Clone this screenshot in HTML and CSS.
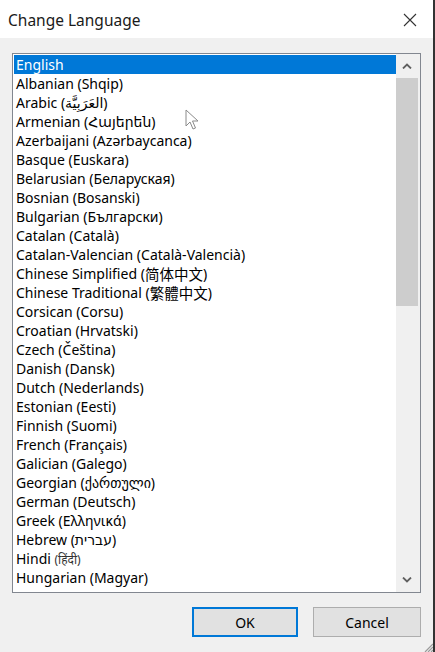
FILE: index.html
```html
<!DOCTYPE html>
<html lang="en">
<head>
<meta charset="UTF-8" />
<meta name="viewport" content="width=device-width, initial-scale=1" />
<title>Change Language</title>
<link rel="stylesheet" href="styles.css">
</head>
<body>
  <div class="dialog">
    <div class="titlebar">
      <span class="title">Change Language</span>
      <svg class="close" width="14" height="14" viewBox="0 0 14 14">
        <path d="M1 1 L13 13 M13 1 L1 13" stroke="#333" stroke-width="1.1" fill="none" />
      </svg>
    </div>

    <div class="body">
      <div class="listbox">
        <ul class="items">
          <li class="selected">English</li>
          <li>Albanian (Shqip)</li>
          <li>Arabic (<span class="ar">العَرَبِيَّة</span>)</li>
          <li>Armenian (Հայերեն)</li>
          <li>Azerbaijani (Azərbaycanca)</li>
          <li>Basque (Euskara)</li>
          <li>Belarusian (Беларуская)</li>
          <li>Bosnian (Bosanski)</li>
          <li>Bulgarian (Български)</li>
          <li>Catalan (Català)</li>
          <li>Catalan-Valencian (Català-Valencià)</li>
          <li>Chinese Simplified (<span class="cjk">简体中文</span>)</li>
          <li>Chinese Traditional (<span class="cjk">繁體中文</span>)</li>
          <li>Corsican (Corsu)</li>
          <li>Croatian (Hrvatski)</li>
          <li>Czech (Čeština)</li>
          <li>Danish (Dansk)</li>
          <li>Dutch (Nederlands)</li>
          <li>Estonian (Eesti)</li>
          <li>Finnish (Suomi)</li>
          <li>French (Français)</li>
          <li>Galician (Galego)</li>
          <li>Georgian (ქართული)</li>
          <li>German (Deutsch)</li>
          <li>Greek (Ελληνικά)</li>
          <li>Hebrew (עברית)</li>
          <li>Hindi <span class="hi">(हिंदी)</span></li>
          <li>Hungarian (Magyar)</li>
        </ul>
        <div class="scrollbar">
          <div class="arrow">
            <svg width="10" height="6" viewBox="0 0 10 6"><path d="M1 5.5 L5 1.5 L9 5.5" stroke="#606060" stroke-width="1.8" fill="none" /></svg>
          </div>
          <div class="track"><div class="thumb"></div></div>
          <div class="arrow">
            <svg width="10" height="6" viewBox="0 0 10 6"><path d="M1 0.5 L5 4.5 L9 0.5" stroke="#606060" stroke-width="1.8" fill="none" /></svg>
          </div>
        </div>
        <svg class="pointer" width="14" height="22" viewBox="0 0 14 22">
          <path d="M1 1 L1 17 L5 13 L8 20 L10.5 19 L7.5 12 L13 12 Z" fill="#fff" stroke="#8a8a8a" stroke-width="1" stroke-linejoin="round" />
        </svg>
      </div>

      <div class="actions">
        <button class="btn default">OK</button>
        <button class="btn cancel">Cancel</button>
      </div>
    </div>

    <svg class="grip" width="10" height="10" viewBox="0 0 10 10">
      <path d="M10 2 L2 10 M10 5 L5 10 M10 8 L8 10" stroke="#9a9a9a" stroke-width="1.2" fill="none" />
    </svg>
  </div>
</body>
</html>
```

FILE: styles.css
```css
body {
  margin: 0;
  background-color: #f0f0f0;
  font-family: 'Noto Sans', 'DejaVu Sans', sans-serif;
  font-size: 14px;
  color: #000;
}
.dialog {
  position: relative;
  width: 433px;
  height: 652px;
  border-right: 2px solid #333;
  background-color: #f0f0f0;
  display: flex;
  flex-direction: column;
  overflow: hidden;
}
.titlebar {
  height: 38px;
  background-color: #fff;
  display: flex;
  align-items: center;
  justify-content: space-between;
  padding: 0 16px 0 8px;
  flex-shrink: 0;
}
.title {
  font-size: 15.5px;
  color: #1a1a1a;
  margin-top: 1px;
}
.close {
  margin-top: 1px;
}
.body {
  padding: 15px 12px 0 12px;
  display: flex;
  flex-direction: column;
}
.listbox {
  position: relative;
  height: 538px;
  border: 1px solid #828790;
  background-color: #fff;
  display: flex;
}
.items {
  list-style: none;
  margin: 0;
  padding: 1px 0 0 1px;
  flex: 1;
  overflow: hidden;
}
.items li {
  height: 19px;
  line-height: 19px;
  padding-left: 2px;
  white-space: nowrap;
}
.items li.selected {
  background-color: #0078d7;
  color: #fff;
}
.cjk {
  display: inline-block;
  height: 19px;
  line-height: 19px;
  overflow: hidden;
  vertical-align: top;
  font-family: 'Noto Sans CJK SC', sans-serif;
  font-size: 14.5px;
}
.hi {
  font-size: 12px;
  color: #333;
}
.scrollbar {
  width: 24px;
  background-color: #f0f0f0;
  display: flex;
  flex-direction: column;
}
.arrow {
  height: 24px;
  display: flex;
  align-items: center;
  justify-content: center;
  padding-right: 2px;
}
.track {
  flex: 1;
  padding-right: 2px;
}
.thumb {
  height: 228px;
  background-color: #cdcdcd;
}
.pointer {
  position: absolute;
  left: 172px;
  top: 55px;
}
.actions {
  display: flex;
  justify-content: flex-end;
  gap: 15px;
  margin-top: 14px;
}
.btn {
  width: 106px;
  height: 30px;
  font-family: 'Noto Sans', 'DejaVu Sans', sans-serif;
  font-size: 14px;
  color: #000;
  background-color: #e1e1e1;
  border: 1px solid #adadad;
  padding: 0;
}
.btn.cancel {
  width: 108px;
}
.btn.default {
  border: 2px solid #0078d7;
}
.grip {
  position: absolute;
  right: 0;
  bottom: 0;
}
```
